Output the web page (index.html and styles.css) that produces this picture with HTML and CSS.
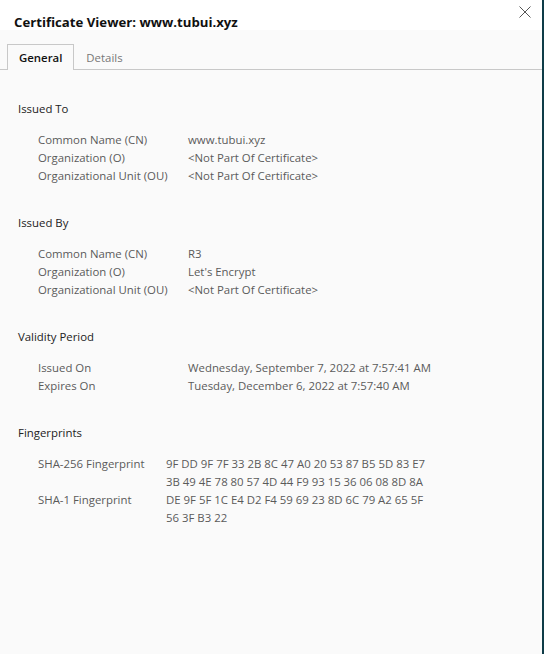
FILE: index.html
```html
<!DOCTYPE html>
<html>
<head>
<meta charset="utf-8">
<link rel="stylesheet" href="styles.css">
</head>
<body>
<div class="dialog">
  <div class="titlebar">
    <div class="title">Certificate Viewer: www.tubui.xyz</div>
    <svg class="close" width="12" height="12" viewBox="0 0 12 12"><path d="M0.5 0.5 L11.5 11.5 M11.5 0.5 L0.5 11.5" stroke="#555" stroke-width="1" fill="none"/></svg>
  </div>
  <div class="tabs">
    <div class="tab active">General</div>
    <div class="tab">Details</div>
  </div>
  <div class="content">
    <section class="section">
      <div class="heading">Issued To</div>
      <div class="rows">
        <div class="label">Common Name (CN)</div><div class="value">www.tubui.xyz</div>
        <div class="label">Organization (O)</div><div class="value">&lt;Not Part Of Certificate&gt;</div>
        <div class="label">Organizational Unit (OU)</div><div class="value">&lt;Not Part Of Certificate&gt;</div>
      </div>
    </section>
    <section class="section">
      <div class="heading">Issued By</div>
      <div class="rows">
        <div class="label">Common Name (CN)</div><div class="value">R3</div>
        <div class="label">Organization (O)</div><div class="value">Let's Encrypt</div>
        <div class="label">Organizational Unit (OU)</div><div class="value">&lt;Not Part Of Certificate&gt;</div>
      </div>
    </section>
    <section class="section">
      <div class="heading">Validity Period</div>
      <div class="rows">
        <div class="label">Issued On</div><div class="value">Wednesday, September 7, 2022 at 7:57:41 AM</div>
        <div class="label">Expires On</div><div class="value">Tuesday, December 6, 2022 at 7:57:40 AM</div>
      </div>
    </section>
    <section class="section">
      <div class="heading">Fingerprints</div>
      <div class="rows fp">
        <div class="label">SHA-256 Fingerprint</div><div class="value hex">9F DD 9F 7F 33 2B 8C 47 A0 20 53 87 B5 5D 83 E7 3B 49 4E 78 80 57 4D 44 F9 93 15 36 06 08 8D 8A</div>
        <div class="label">SHA-1 Fingerprint</div><div class="value hex">DE 9F 5F 1C E4 D2 F4 59 69 23 8D 6C 79 A2 65 5F 56 3F B3 22</div>
      </div>
    </section>
  </div>
</div>
</body>
</html>
```

FILE: styles.css
```css
html, body {
  margin: 0;
  padding: 0;
}
body {
  background: #0e3c48;
  font-family: "Open Sans", "Noto Sans", sans-serif;
  font-size: 11.4px;
}
.dialog {
  width: 542px;
  height: 654px;
  background: #fafafa;
  display: flex;
  flex-direction: column;
}
.titlebar {
  height: 30px;
  background: #ffffff;
  display: flex;
  align-items: flex-start;
  justify-content: space-between;
  padding: 0 11px 0 14px;
}
.title {
  font-weight: 700;
  font-size: 13.2px;
  color: #111;
  margin-top: 12px;
  line-height: 20px;
}
.close {
  margin-top: 6px;
}
.tabs {
  display: flex;
  padding: 14px 0 0 7px;
  border-bottom: 1px solid #c8c8c8;
}
.tab {
  height: 24px;
  line-height: 26px;
  padding: 0 11px;
  color: #777;
  border: 1px solid transparent;
  border-bottom: none;
}
.tab.active {
  color: #111;
  font-weight: 600;
  border-color: #c8c8c8;
  background: #fafafa;
  margin-bottom: -1px;
  height: 25px;
}
.content {
  padding: 30px 0 0 18px;
  display: flex;
  flex-direction: column;
  gap: 29px;
}
.heading {
  line-height: 18px;
  color: #222;
  margin-bottom: 13px;
}
.rows {
  display: grid;
  grid-template-columns: 150px 1fr;
  padding-left: 20px;
  line-height: 18px;
  color: #5a5a5a;
}
.rows.fp {
  grid-template-columns: 128px 1fr;
}
.hex {
  width: 268px;
}
```
